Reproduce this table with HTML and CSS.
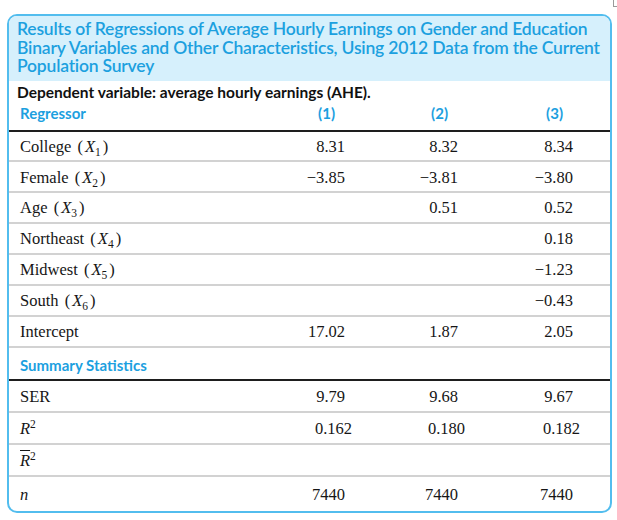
FILE: index.html
```html
<!DOCTYPE html>
<html lang="en">
<head>
<meta charset="utf-8">
<title>Regression results</title>
<link rel="stylesheet" href="styles.css">
</head>
<body>
<div class="mark"></div>
<div class="card">
  <div class="head">
    <h1 class="title">Results of Regressions of Average Hourly Earnings on Gender and Education<br>Binary Variables and Other Characteristics, Using 2012 Data from the Current<br>Population Survey</h1>
  </div>
  <div class="dep">Dependent variable: average hourly earnings (AHE).</div>
  <div class="row hdr">
    <div class="lab">Regressor</div>
    <div class="col">(1)</div>
    <div class="col">(2)</div>
    <div class="col">(3)</div>
  </div>
  <div class="row">
    <div class="lab">College <span class="p">(</span><i>X</i><sub>1</sub><span class="p">)</span></div>
    <div class="num">8.31</div><div class="num">8.32</div><div class="num">8.34</div>
  </div>
  <div class="row">
    <div class="lab">Female <span class="p">(</span><i>X</i><sub>2</sub><span class="p">)</span></div>
    <div class="num">&minus;3.85</div><div class="num">&minus;3.81</div><div class="num">&minus;3.80</div>
  </div>
  <div class="row">
    <div class="lab">Age <span class="p">(</span><i>X</i><sub>3</sub><span class="p">)</span></div>
    <div class="num"></div><div class="num">0.51</div><div class="num">0.52</div>
  </div>
  <div class="row">
    <div class="lab">Northeast <span class="p">(</span><i>X</i><sub>4</sub><span class="p">)</span></div>
    <div class="num"></div><div class="num"></div><div class="num">0.18</div>
  </div>
  <div class="row">
    <div class="lab">Midwest <span class="p">(</span><i>X</i><sub>5</sub><span class="p">)</span></div>
    <div class="num"></div><div class="num"></div><div class="num">&minus;1.23</div>
  </div>
  <div class="row">
    <div class="lab">South <span class="p">(</span><i>X</i><sub>6</sub><span class="p">)</span></div>
    <div class="num"></div><div class="num"></div><div class="num">&minus;0.43</div>
  </div>
  <div class="row">
    <div class="lab">Intercept</div>
    <div class="num">17.02</div><div class="num">1.87</div><div class="num">2.05</div>
  </div>
  <div class="row summary">
    <div class="lab">Summary Statistics</div>
  </div>
  <div class="row stat">
    <div class="lab">SER</div>
    <div class="num">9.79</div><div class="num">9.68</div><div class="num">9.67</div>
  </div>
  <div class="row stat">
    <div class="lab"><i>R</i><sup>2</sup></div>
    <div class="num"><span class="d3">0.162</span></div><div class="num"><span class="d3">0.180</span></div><div class="num"><span class="d3">0.182</span></div>
  </div>
  <div class="row stat">
    <div class="lab"><i class="bar">R</i><sup>2</sup></div>
    <div class="num"></div><div class="num"></div><div class="num"></div>
  </div>
  <div class="row stat last">
    <div class="lab"><i>n</i></div>
    <div class="num">7440</div><div class="num">7440</div><div class="num">7440</div>
  </div>
</div>
</body>
</html>
```

FILE: styles.css
```css
html, body {
  margin: 0;
  padding: 0;
  background: #ffffff;
}

body {
  width: 617px;
  height: 520px;
  position: relative;
  overflow: hidden;
}

.mark {
  position: absolute;
  left: 613px;
  top: 0;
  width: 5px;
  height: 6px;
  border-left: 1px solid #9a9a9a;
  border-bottom: 1px solid #9a9a9a;
}

.card {
  margin: 14px 0 0 7px;
  width: 605px;
  box-sizing: border-box;
  border: 2px solid #52bdee;
  border-radius: 10px;
  overflow: hidden;
  background: #ffffff;
}

.head {
  background: #d6f0fc;
  padding: 4px 8px 5px 8px;
}

.title {
  margin: 0;
  font-family: "Lato", "Open Sans", sans-serif;
  font-weight: 600;
  font-size: 17.5px;
  line-height: 18.5px;
  letter-spacing: -0.2px;
  white-space: nowrap;
  color: #1ca0df;
}

.dep {
  font-family: "Lato", "Open Sans", sans-serif;
  font-weight: 700;
  font-size: 15.5px;
  line-height: 22px;
  height: 22px;
  padding-left: 8px;
  color: #111111;
}

.row {
  display: grid;
  grid-template-columns: 1fr 113px 113px 115px;
  align-items: center;
  height: 27.4px;
  padding: 1.5px 37px 0 11px;
  border-bottom: 2px solid #d2d2d2;
  font-family: "Liberation Serif", "Times New Roman", serif;
  font-size: 16.5px;
  color: #161616;
}

.row.hdr {
  height: 27px;
  padding-top: 0;
  align-items: start;
  border-bottom: 2px solid #1e1e1e;
  font-family: "Lato", "Open Sans", sans-serif;
  font-weight: 700;
  font-size: 15px;
  line-height: 20px;
  color: #1ca0df;
}

.hdr .lab {
  padding-top: 0;
}

.hdr .col {
  text-align: right;
  padding-right: 10px;
}

.row.summary {
  box-sizing: border-box;
  height: 33px;
  padding-top: 3px;
  border-bottom: 2px solid #1e1e1e;
  font-family: "Lato", "Open Sans", sans-serif;
  font-weight: 700;
  font-size: 15px;
  color: #1ca0df;
}

.row.stat {
  height: 28.2px;
  padding-top: 2px;
}

.row.last {
  height: 32px;
  border-bottom: none;
}

.num {
  text-align: right;
  white-space: nowrap;
}

.d3 {
  margin-right: -7px;
}

.lab {
  white-space: nowrap;
}

.lab i {
  font-style: italic;
}

.lab .p {
  margin: 0 2px;
}

.lab sub {
  font-size: 11.5px;
  vertical-align: -4px;
  line-height: 0;
}

.lab sup {
  font-size: 11.5px;
  vertical-align: 6px;
  line-height: 0;
}

.bar {
  text-decoration: overline;
  text-decoration-thickness: 1px;
}
```
